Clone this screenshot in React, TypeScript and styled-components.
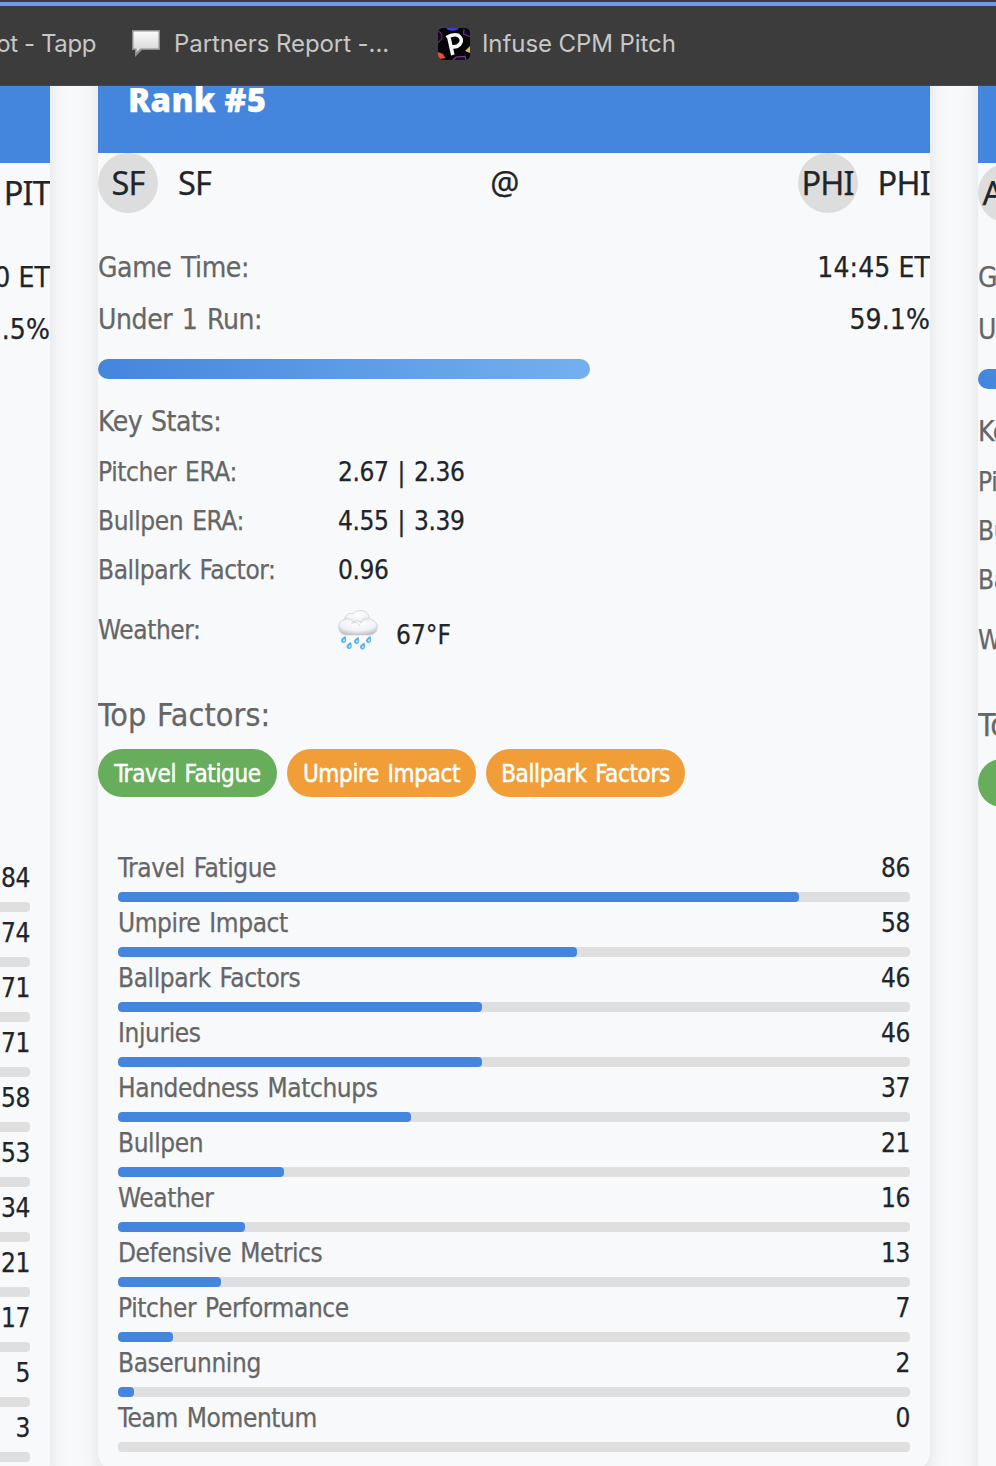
import React from "react";
import styled, { createGlobalStyle } from "styled-components";

const GlobalStyle = createGlobalStyle`
  * { box-sizing: border-box; }
  html, body { margin: 0; padding: 0; }
  body {
    background: #f8f9fb;
    color: #212529;
    font-family: "DejaVu Sans Condensed", "DejaVu Sans", sans-serif;
    font-stretch: condensed;
    overflow: hidden;
  }
`;

const Page = styled.div`
  width: 996px;
  height: 1466px;
  display: flex;
  flex-direction: column;
  overflow: hidden;
`;

const BookmarkBar = styled.header`
  flex: none;
  height: 86px;
  display: flex;
  align-items: center;
  background: #3c3c3c;
  border-bottom: 1px solid #474747;
  box-shadow: inset 0 2px #3c3c3c, inset 0 6px #6f9bee;
  padding-top: 3px;
  overflow: hidden;
`;

const Bookmark = styled.div<{ $width: number; $end?: boolean; $gap?: number }>`
  flex: none;
  width: ${(p) => p.$width}px;
  display: flex;
  align-items: center;
  justify-content: ${(p) => (p.$end ? "flex-end" : "flex-start")};
  gap: ${(p) => p.$gap ?? 0}px;
  color: #c7c7c7;
  font-family: Inter, sans-serif;
  font-size: 24px;
  letter-spacing: ${(p) => (p.$end ? -0.4 : -0.08)}px;
  line-height: 28px;
  padding-bottom: 1px;
  white-space: nowrap;
`;

const BookmarkInset = styled.span`
  width: 22px;
`;

const Viewport = styled.main`
  flex: 1;
  min-height: 0;
  overflow: hidden;
`;

const Carousel = styled.div`
  display: flex;
  align-items: flex-start;
  gap: 48px;
  margin-left: -782px;
  width: 2592px;
`;

const CardBox = styled.article<{ $raised?: boolean }>`
  flex: none;
  width: 832px;
  min-height: 1419px;
  margin-top: ${(p) => (p.$raised ? -33 : -23)}px;
  background: #f8f9fb;
  border-radius: 20px;
  box-shadow: 0 8px 20px rgba(0, 0, 0, 0.1);
  overflow: hidden;
  -webkit-text-stroke: 0.25px;
`;

const CardHeader = styled.h2`
  margin: 0;
  height: 100px;
  padding: 26px 30px 0;
  background: #4486dd;
  color: #fff;
  font-family: "Noto Sans", sans-serif;
  font-stretch: normal;
  font-size: 33px;
  line-height: 41px;
  font-weight: 900;
  letter-spacing: 0.25px;
`;

const Matchup = styled.div`
  height: 60px;
  display: flex;
  align-items: center;
  justify-content: space-between;
  font-family: "Noto Sans", sans-serif;
  font-stretch: normal;
  font-size: 32.5px;
  line-height: 42px;
  letter-spacing: -0.8px;
`;

const Team = styled.div`
  display: flex;
  align-items: center;
  gap: 20px;
`;

const TeamLogo = styled.span`
  width: 60px;
  height: 60px;
  border-radius: 50%;
  background: #ddd;
  display: flex;
  align-items: center;
  justify-content: center;
`;

const Details = styled.div`
  padding-top: 28px;
`;

const DetailRow = styled.div`
  height: 52px;
  display: flex;
  align-items: center;
  justify-content: space-between;
  font-size: 28px;
  letter-spacing: 0.1px;
`;

const Label = styled.span`
  color: #666;
  letter-spacing: -0.4px;
  word-spacing: 2px;
  white-space: nowrap;
`;

const Probability = styled.div<{ $value: number }>`
  width: ${(p) => p.$value}%;
  height: 20px;
  margin: 14px 0 17px;
  border-radius: 10px;
  background: linear-gradient(90deg, #4486dd, #74b0ef);
`;

const StatsTitle = styled.h3`
  margin: 0;
  height: 52px;
  line-height: 52px;
  color: #666;
  font-size: 28px;
  font-weight: 400;
  letter-spacing: -0.4px;
  word-spacing: 1px;
`;

const StatRow = styled.div<{ $tall?: boolean }>`
  height: ${(p) => (p.$tall ? 70 : 49)}px;
  padding-bottom: ${(p) => (p.$tall ? 0 : 2)}px;
  display: grid;
  grid-template-columns: 240px 1fr;
  align-items: center;
  font-size: 26px;
  letter-spacing: -0.4px;
  word-spacing: 2px;
`;

const Conditions = styled.span`
  display: flex;
  align-items: center;
  gap: 18px;
`;

const Temperature = styled.span`
  padding-top: 9px;
  letter-spacing: 0;
`;

const TopTitle = styled.h3`
  margin: 16px 0 0;
  height: 68px;
  line-height: 68px;
  color: #666;
  font-size: 32px;
  font-weight: 400;
  letter-spacing: 0.1px;
  word-spacing: 1.5px;
`;

const Badges = styled.div`
  display: flex;
  gap: 10px;
  height: 48px;
`;

const Badge = styled.span<{ $tone: "green" | "orange"; $width: number }>`
  width: ${(p) => p.$width}px;
  flex: none;
  height: 48px;
  padding-top: 2px;
  border-radius: 24px;
  display: flex;
  align-items: center;
  justify-content: center;
  color: #fff;
  font-size: 24px;
  letter-spacing: -0.35px;
  word-spacing: 2px;
  white-space: nowrap;
  -webkit-text-stroke: 0.5px #fff;
  background: ${(p) => (p.$tone === "green" ? "#67ad5b" : "#f19e39")};
`;

const FactorList = styled.section`
  padding: 50px 20px 20px;
`;

const FactorText = styled.div`
  height: 45px;
  padding-bottom: 4px;
  display: flex;
  align-items: center;
  justify-content: space-between;
  font-size: 26px;
  letter-spacing: -0.4px;
`;

const Track = styled.div`
  height: 10px;
  border-radius: 4px;
  background: #dfdfdf;
  overflow: hidden;
`;

const Fill = styled.div`
  height: 100%;
  border-radius: 4px;
  background: #4486dd;
`;

const ChatIcon = () => (
  <svg width="30" height="30" viewBox="0 0 30 30">
    <defs>
      <linearGradient id="bubble" x1="0" y1="0" x2="0" y2="1">
        <stop offset="0" stopColor="#fbfbfb" />
        <stop offset="1" stopColor="#d4d4d4" />
      </linearGradient>
    </defs>
    <path d="M1 1H29V21H11L4 28V21H1Z" fill="#8e8e8e" />
    <path d="M2.500 2.500H27.500V19.500H9.500L5.500 23.500V19.500H2.500Z" fill="url(#bubble)" />
  </svg>
);

const PitchIcon = () => (
  <svg width="32" height="32" viewBox="0 0 32 32">
    <defs>
      <clipPath id="tile"><rect width="32" height="32" rx="5" /></clipPath>
    </defs>
    <g clipPath="url(#tile)">
      <rect width="32" height="32" fill="#060508" />
      <ellipse cx="14.500" cy="0" rx="6" ry="2.800" fill="#3c3de0" />
      <path d="M26 1L25.500 6L33 9" fill="#130a22" stroke="#583292" strokeWidth="1.300" />
      <path d="M0 3Q5 5 3.500 11L0 15" fill="#1a0716" stroke="#522a78" strokeWidth="1.200" />
      <path d="M0 24L5 26L7.500 30L2 31L0 29Z" fill="#dc5434" />
      <path d="M27 23L32 18V25Z" fill="#e5b54a" />
      <path d="M15 32L18 29L27 28.500L28 32" fill="#160c2a" stroke="#7b3e8a" strokeWidth="1.200" />
      <path d="M8.500 9.500Q15 5.500 20 7.200Q25.500 11 22 16Q18.500 20 13 18.500M11 10L14.800 27" fill="none" stroke="#f6f6f6" strokeWidth="3.600" />
    </g>
  </svg>
);

const drops = [[6, 29.5], [11.5, 35.5], [19, 30.5], [25, 36], [31, 29.5]];

const RainIcon = () => (
  <svg width="40" height="40" viewBox="0 0 40 40">
    <defs>
      <radialGradient id="cloud" cx="0.5" cy="0.3" r="0.7">
        <stop offset="0" stopColor="#ffffff" />
        <stop offset="0.65" stopColor="#f1f2f5" />
        <stop offset="1" stopColor="#bcc2cb" />
      </radialGradient>
    </defs>
    <g fill="url(#cloud)" stroke="#c9cdd5" strokeWidth="0.7">
      <path d="M7 11C6 5 11 2 15 4C18-1 29-1 31 6C32 8 32 11 30 14H9Z" />
      <path d="M9 25C-2 25-2 10 8 9C11 8 14 10 15 12C18 10 21 11 23 13C23 8 31 6 34 10C42 12 41 25 31 25Z" />
    </g>
    <path d="M13 14C17 11 21 13 22 16M23 13C24 10 28 9 31 10" fill="none" stroke="#d5d8de" strokeWidth="1" />
    {drops.map(([x, y]) => (
      <g key={`${x}-${y}`} transform={`translate(${x} ${y}) rotate(22)`}>
        <path d="M0-3.800C1.300-2 2.500-.5 2.500 1A2.400 2.400 0 0 1-2.500 1C-2.500-.5-1.300-2 0-3.800Z" fill="#55aee9" />
        <ellipse cx="0.3" cy="0.8" rx="0.9" ry="1.300" fill="#c4e8fc" />
      </g>
    ))}
  </svg>
);

type FactorData = { name?: string; value: number };
type Tag = { text: string; tone: "green" | "orange"; width: number };
type Game = {
  rank?: string;
  away?: string;
  home?: string;
  time?: string;
  under?: string;
  probability: number;
  labels?: boolean;
  stats?: string[];
  temperature?: string;
  tags: Tag[];
  factors: FactorData[];
  raised?: boolean;
};

const statNames = ["Pitcher ERA:", "Bullpen ERA:", "Ballpark Factor:"];

const games: Game[] = [
  {
    home: "PIT",
    time: "0 ET",
    under: ".5%",
    probability: 60,
    tags: [],
    factors: [84, 74, 71, 71, 58, 53, 34, 21, 17, 5, 3].map((value) => ({ value })),
  },
  {
    rank: "Rank #5",
    away: "SF",
    home: "PHI",
    time: "14:45 ET",
    under: "59.1%",
    probability: 59.1,
    labels: true,
    stats: ["2.67 | 2.36", "4.55 | 3.39", "0.96"],
    temperature: "67°F",
    raised: true,
    tags: [
      { text: "Travel Fatigue", tone: "green", width: 179 },
      { text: "Umpire Impact", tone: "orange", width: 189 },
      { text: "Ballpark Factors", tone: "orange", width: 199 },
    ],
    factors: [
      { name: "Travel Fatigue", value: 86 },
      { name: "Umpire Impact", value: 58 },
      { name: "Ballpark Factors", value: 46 },
      { name: "Injuries", value: 46 },
      { name: "Handedness Matchups", value: 37 },
      { name: "Bullpen", value: 21 },
      { name: "Weather", value: 16 },
      { name: "Defensive Metrics", value: 13 },
      { name: "Pitcher Performance", value: 7 },
      { name: "Baserunning", value: 2 },
      { name: "Team Momentum", value: 0 },
    ],
  },
  {
    away: "ATL",
    probability: 59,
    labels: true,
    tags: [{ text: "Bullpen", tone: "green", width: 116 }],
    factors: [],
  },
];

const GameCard = ({ game }: { game: Game }) => (
  <CardBox $raised={game.raised}>
    <CardHeader>{game.rank}</CardHeader>
    <Matchup>
      <Team>
        {game.away && <TeamLogo>{game.away}</TeamLogo>}
        {game.raised && <span>{game.away}</span>}
      </Team>
      {game.raised && <span>@</span>}
      <Team>
        {game.raised && <TeamLogo>{game.home}</TeamLogo>}
        <span>{game.home}</span>
      </Team>
    </Matchup>
    <Details>
      <DetailRow>
        <Label>{game.labels && "Game Time:"}</Label>
        <span>{game.time}</span>
      </DetailRow>
      <DetailRow>
        <Label>{game.labels && "Under 1 Run:"}</Label>
        <span>{game.under}</span>
      </DetailRow>
      <Probability $value={game.probability} />
      <StatsTitle>{game.labels && "Key Stats:"}</StatsTitle>
      {statNames.map((name, i) => (
        <StatRow key={name}>
          <Label>{game.labels && name}</Label>
          <span>{game.stats?.[i]}</span>
        </StatRow>
      ))}
      <StatRow $tall>
        <Label>{game.labels && "Weather:"}</Label>
        {game.temperature && (
          <Conditions>
            <RainIcon />
            <Temperature>{game.temperature}</Temperature>
          </Conditions>
        )}
      </StatRow>
      <TopTitle>{game.labels && "Top Factors:"}</TopTitle>
      <Badges>
        {game.tags.map((tag) => (
          <Badge key={tag.text} $tone={tag.tone} $width={tag.width}>{tag.text}</Badge>
        ))}
      </Badges>
    </Details>
    <FactorList>
      {game.factors.map((factor, i) => (
        <div key={i}>
          <FactorText>
            <Label>{factor.name}</Label>
            <span>{factor.value}</span>
          </FactorText>
          <Track>
            <Fill style={{ width: `${factor.value}%` }} />
          </Track>
        </div>
      ))}
    </FactorList>
  </CardBox>
);

export default function App() {
  return (
    <Page>
      <GlobalStyle />
      <BookmarkBar>
        <Bookmark $width={96} $end>ot - Tapp</Bookmark>
        <Bookmark $width={342} $gap={13}>
          <BookmarkInset />
          <ChatIcon />
          <span>Partners Report -...</span>
        </Bookmark>
        <Bookmark $width={280} $gap={12}>
          <PitchIcon />
          <span>Infuse CPM Pitch</span>
        </Bookmark>
      </BookmarkBar>
      <Viewport>
        <Carousel>
          {games.map((game, i) => (
            <GameCard key={i} game={game} />
          ))}
        </Carousel>
      </Viewport>
    </Page>
  );
}
